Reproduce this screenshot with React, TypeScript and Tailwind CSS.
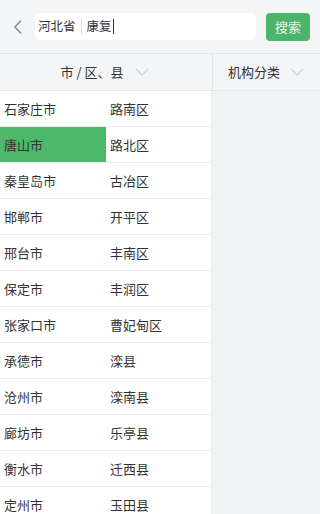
import React from "react";

const cities = ["石家庄市", "唐山市", "秦皇岛市", "邯郸市", "邢台市", "保定市", "张家口市", "承德市", "沧州市", "廊坊市", "衡水市", "定州市"];
const districts = ["路南区", "路北区", "古冶区", "开平区", "丰南区", "丰润区", "曹妃甸区", "滦县", "滦南县", "乐亭县", "迁西县", "玉田县"];

const Chevron = () => (
  <svg width="14" height="8" viewBox="0 0 14 8" fill="none" stroke="#cfd3d6" strokeWidth="1.3">
    <path d="M1 1l6 6 6-6" />
  </svg>
);

export default function App() {
  const selected = 1;
  return (
    <div className="w-[320px] h-[514px] overflow-hidden bg-[#f0f3f4] text-[#333]" style={{ fontFamily: '"Noto Sans CJK SC", "Noto Sans", sans-serif' }}>
      {/* header */}
      <div className="h-[54px] flex items-center bg-[#f4f5f6] border-b border-[#e3e5e7]">
        <button className="w-[35px] h-full flex items-center justify-center">
          <svg width="10" height="16" viewBox="0 0 10 16" fill="none" stroke="#8a8f94" strokeWidth="1.6">
            <path d="M8 1.5L2 8l6 6.5" />
          </svg>
        </button>
        <div className="w-[221px] h-[27px] bg-white rounded-[5px] flex items-center pl-[3px] text-[12.5px]">
          <span>河北省</span>
          <span className="w-px h-[16px] bg-[#dcdcdc] mx-[5px]" />
          <span>康复</span>
          <span className="w-px h-[15px] bg-[#333] ml-px" />
        </div>
        <button className="ml-[10px] w-[44px] h-[28px] rounded-[4px] bg-[#4cb46b] text-[#eaf7ee] text-[13px] flex items-center justify-center">
          搜索
        </button>
      </div>

      {/* filter bar */}
      <div className="h-[37px] flex bg-[#f4f5f6] border-b border-[#e3e5e7] text-[13px]">
        <div className="w-[212px] flex items-center justify-center gap-[12px] pr-[2px]">
          <span>市 / 区、县</span>
          <Chevron />
        </div>
        <div className="flex-1 flex items-center justify-between border-l border-[#e3e5e7] pl-[15px] pr-[16px]">
          <span>机构分类</span>
          <Chevron />
        </div>
      </div>

      {/* list */}
      <div className="flex">
        <div className="w-[212px] bg-white border-r border-[#e8ebed]">
          {cities.map((c, i) => (
            <div key={c} className="h-[36px] flex border-b border-[#ededed] text-[13px]">
              <div className={`w-[106px] flex items-center pl-[4px] ${i === selected ? "bg-[#4cb86a]" : ""}`}>{c}</div>
              <div className="flex-1 flex items-center pl-[4px]">{districts[i]}</div>
            </div>
          ))}
        </div>
        <div className="flex-1" />
      </div>
    </div>
  );
}
